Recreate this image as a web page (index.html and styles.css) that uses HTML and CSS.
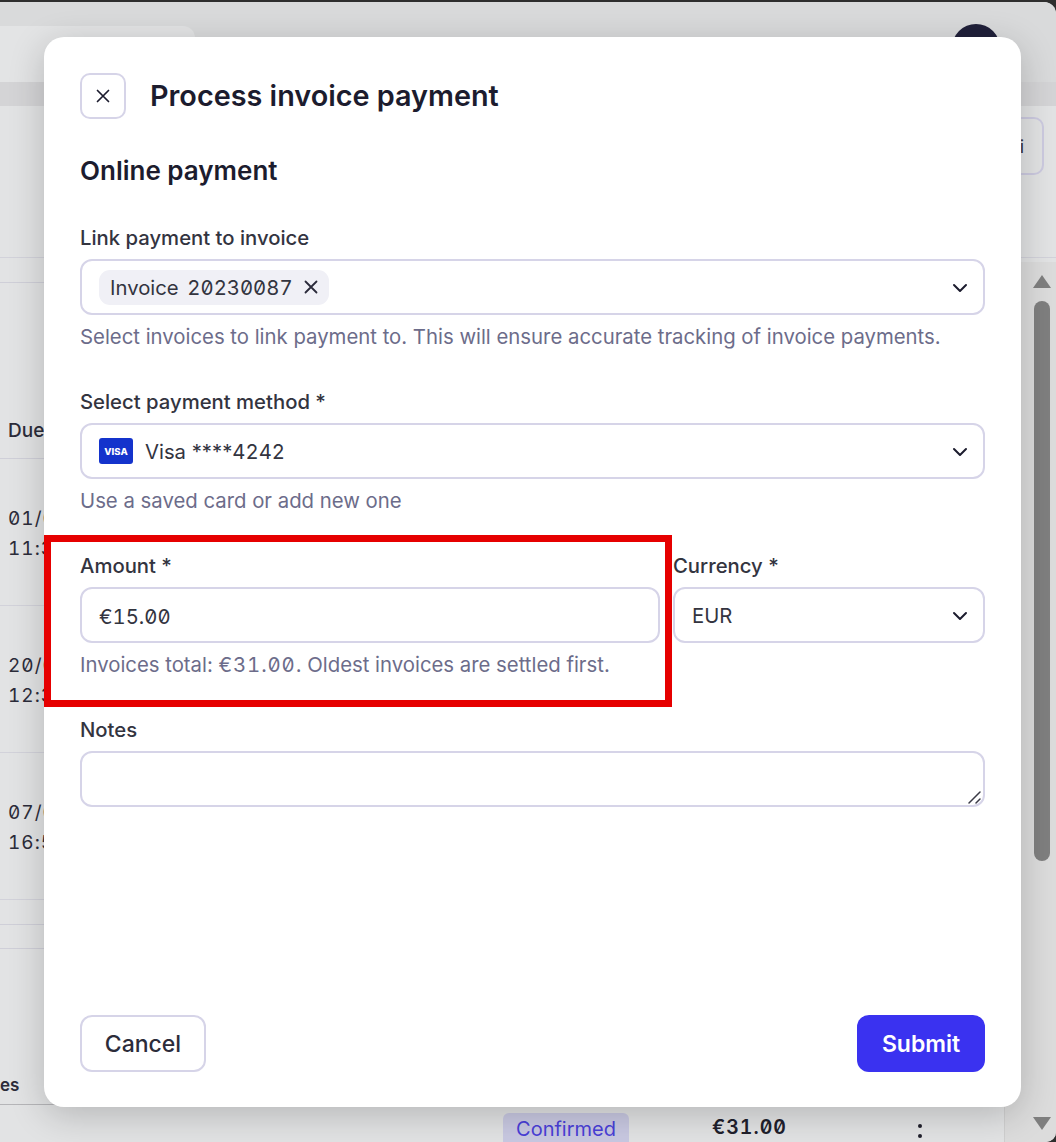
FILE: index.html
```html
<!DOCTYPE html>
<html lang="en">
<head>
    <meta charset="UTF-8" />
    <meta name="viewport" content="width=device-width, initial-scale=1.0">
    <title>Process invoice payment</title>
    <link rel="stylesheet" href="styles.css">
</head>
<body>
    <div class="window">
        <div class="topbar">
            <div class="tab"></div>
            <div class="avatar"></div>
        </div>
        <div class="band"></div>
        <div class="toolbar">
            <button class="tool-btn" type="button">Filtri</button>
        </div>
        <div class="content">
            <div class="table">
                <div class="table-gap"></div>
                <div class="table-head">Due date</div>
                <div class="table-row"><span>01/06</span><span>11:32</span></div>
                <div class="table-row"><span>20/05</span><span>12:30</span></div>
                <div class="table-row"><span>07/05</span><span>16:50</span></div>
                <div class="table-thin"></div>
                <div class="table-thin"></div>
                <div class="table-foot">
                    <span class="foot-label">es</span>
                </div>
                <div class="table-last">
                    <span class="badge">Confirmed</span>
                    <span class="last-amount">€31.00</span>
                    <span class="kebab"><i></i><i></i></span>
                </div>
            </div>
            <div class="scrollbar">
                <div class="arrow-up"></div>
                <div class="thumb"></div>
                <div class="arrow-down"></div>
            </div>
        </div>
    </div>

    <div class="modal">
        <div class="modal-header">
            <button class="close-btn" type="button" aria-label="Close">
                <svg width="16" height="16" viewBox="0 0 16 16" fill="none" stroke="#1c1c2e" stroke-width="1.7" stroke-linecap="round"><path d="M2.5 2.5l11 11M13.5 2.5l-11 11"/></svg>
            </button>
            <h1>Process invoice payment</h1>
        </div>

        <h2>Online payment</h2>

        <form class="payment-form">
            <div class="form-group">
                <label>Link payment to invoice</label>
                <div class="select-box">
                    <span class="chip"><span>Invoice <span class="num">20230087</span></span>
                        <svg width="16" height="16" viewBox="0 0 16 16" fill="none" stroke="#2a2a3a" stroke-width="1.8" stroke-linecap="round"><path d="M2.5 2.5l11 11M13.5 2.5l-11 11"/></svg>
                    </span>
                    <svg class="chevron" width="16" height="10" viewBox="0 0 16 10" fill="none" stroke="#1c1c2e" stroke-width="2" stroke-linecap="round" stroke-linejoin="round"><path d="M2 2l6 6 6-6"/></svg>
                </div>
                <div class="help">Select invoices to link payment to. This will ensure accurate tracking of invoice payments.</div>
            </div>

            <div class="form-group">
                <label>Select payment method *</label>
                <div class="select-box">
                    <span class="visa"><span>VISA</span></span>
                    <span>Visa ****<span class="num">4242</span></span>
                    <svg class="chevron" width="16" height="10" viewBox="0 0 16 10" fill="none" stroke="#1c1c2e" stroke-width="2" stroke-linecap="round" stroke-linejoin="round"><path d="M2 2l6 6 6-6"/></svg>
                </div>
                <div class="help">Use a saved card or add new one</div>
            </div>

            <div class="form-row">
                <div class="form-group">
                    <label for="amount">Amount *</label>
                    <input type="text" id="amount" value="€15.00" />
                    <div class="help">Invoices total: <span class="num">€31.00</span>. Oldest invoices are settled first.</div>
                </div>
                <div class="form-group">
                    <label>Currency *</label>
                    <div class="select-box">
                        <span>EUR</span>
                        <svg class="chevron" width="16" height="10" viewBox="0 0 16 10" fill="none" stroke="#1c1c2e" stroke-width="2" stroke-linecap="round" stroke-linejoin="round"><path d="M2 2l6 6 6-6"/></svg>
                    </div>
                </div>
            </div>

            <div class="form-group">
                <label for="notes">Notes</label>
                <div class="notes-wrap">
                    <textarea id="notes"></textarea>
                    <svg class="resize-handle" width="14" height="14" viewBox="0 0 14 14" fill="none" stroke="#3a3a46" stroke-width="1.5" stroke-linecap="round"><path d="M1 13L12 2M8 13l4-4"/></svg>
                </div>
            </div>
        </form>

        <div class="modal-footer">
            <button class="btn-cancel" type="button">Cancel</button>
            <button class="btn-submit" type="button">Submit</button>
        </div>
    </div>

    <div class="highlight"></div>
</body>
</html>
```

FILE: styles.css
```css
* {
    box-sizing: border-box;
}

html, body {
    margin: 0;
    height: 1142px;
    overflow: hidden;
}

body {
    position: relative;
    font-family: Inter, "Noto Sans", sans-serif;
    background-color: #2e2e2e;
}

/* page behind the dialog */
.window {
    height: 1140px;
    margin-top: 2px;
    display: flex;
    flex-direction: column;
    overflow: hidden;
    background-color: #e2e3e4;
    border-top-right-radius: 12px;
    border-bottom-right-radius: 10px;
}

.topbar {
    height: 80px;
    padding-top: 24px;
    display: flex;
    justify-content: space-between;
    background-color: #d9dadb;
}

.tab {
    width: 195px;
    height: 56px;
    background-color: #e3e4e5;
    border-top-right-radius: 12px;
}

.avatar {
    width: 48px;
    height: 48px;
    margin-top: -2px;
    margin-right: 56px;
    border-radius: 50%;
    background-color: #20203a;
}

.band {
    height: 24px;
    background-color: #d4d4d6;
}

.toolbar {
    height: 152px;
    padding: 11px 12px 0 0;
    display: flex;
    justify-content: flex-end;
    border-bottom: 1px solid #d2d2da;
}

.tool-btn {
    width: 120px;
    height: 58px;
    padding: 0 18px 0 0;
    text-align: right;
    font-family: inherit;
    font-size: 18px;
    color: #33343f;
    background: transparent;
    border: 2px solid #cccae0;
    border-radius: 10px;
}

.content {
    flex: 1;
    display: flex;
    min-height: 0;
}

.table {
    flex: 1;
    position: relative;
}

.table-gap {
    height: 25px;
    border-bottom: 1px solid #cfcfd8;
}

.table-head {
    height: 176px;
    padding: 136px 0 0 8px;
    font-size: 19px;
    font-weight: 500;
    color: #2c2c3a;
    border-bottom: 1px solid #cfcfd8;
}

.table-row {
    height: 147px;
    padding: 49px 0 0 8px;
    display: flex;
    flex-direction: column;
    gap: 8px;
    font-size: 19px;
    line-height: 22px;
    letter-spacing: 1px;
    color: #2c2c3a;
    font-feature-settings: "tnum", "zero";
    border-bottom: 1px solid #d2d2da;
}

.table-thin {
    height: 24.5px;
    border-bottom: 1px solid #cfcfd8;
}

.table-foot {
    height: 156px;
    padding: 126px 0 0 0;
    border-bottom: 1.5px solid #b5b5b8;
}

.foot-label {
    font-size: 17px;
    line-height: 20px;
    font-weight: 600;
    color: #2c2c3a;
}

.table-last {
    display: flex;
    align-items: flex-start;
    padding: 8px 0 0 503px;
}

.badge {
    width: 126px;
    height: 40px;
    padding-top: 4px;
    text-align: center;
    font-size: 20px;
    color: #4a3fd8;
    background-color: #c9c9e2;
    border-radius: 6px;
}

.last-amount {
    margin: 2px 0 0 83px;
    font-size: 19.5px;
    font-weight: 600;
    letter-spacing: 1px;
    color: #20202c;
    font-feature-settings: "tnum", "zero";
}

.kebab {
    margin: 11px 0 0 131px;
    display: flex;
    flex-direction: column;
    gap: 6px;
}

.kebab i {
    display: block;
    width: 4px;
    height: 4px;
    border-radius: 50%;
    background-color: #20202c;
}

.scrollbar {
    width: 52px;
    margin-top: 4px;
    padding-left: 30px;
    background-color: #dcdcdc;
    border-left: 1px solid #cfcfcf;
    display: flex;
    flex-direction: column;
    align-items: flex-start;
}

.arrow-up,
.arrow-down {
    width: 0;
    height: 0;
    margin-left: -2px;
    border-left: 9px solid transparent;
    border-right: 9px solid transparent;
}

.arrow-up {
    margin-top: 13px;
    border-bottom: 13px solid #7f7f7f;
}

.arrow-down {
    margin-top: 256px;
    border-top: 13px solid #7f7f7f;
}

.thumb {
    width: 16px;
    height: 560px;
    margin: 13px 0 0 -1px;
    background-color: #7f7f7f;
    border-radius: 8px;
}

/* dialog */
.modal {
    position: absolute;
    left: 44px;
    top: 37px;
    width: 977px;
    height: 1070px;
    padding: 36px 36px 35px;
    display: flex;
    flex-direction: column;
    background-color: #fff;
    border-radius: 20px;
    box-shadow: 0 8px 36px rgba(0,0,0,0.2);
}

.modal-header {
    display: flex;
    align-items: center;
    gap: 24px;
}

.close-btn {
    width: 46px;
    height: 46px;
    padding: 0;
    display: flex;
    align-items: center;
    justify-content: center;
    background: #fff;
    border: 2px solid #d6d4e8;
    border-radius: 10px;
}

h1 {
    margin: 0;
    font-size: 28.8px;
    line-height: 34px;
    font-weight: 600;
    color: #1c1c2e;
}

h2 {
    margin: 35px 0 0;
    font-size: 26px;
    line-height: 34px;
    font-weight: 600;
    color: #1c1c2e;
}

.payment-form {
    margin-top: 38px;
    display: flex;
    flex-direction: column;
    gap: 41px;
}

.form-row {
    display: grid;
    grid-template-columns: 580px 312px;
    gap: 13px;
}

label {
    display: block;
    margin-bottom: 9px;
    font-size: 20.3px;
    line-height: 24px;
    font-weight: 500;
    color: #33343f;
}

.select-box,
input,
textarea {
    display: flex;
    align-items: center;
    width: 100%;
    height: 56px;
    padding: 0 17px;
    background-color: #fff;
    border: 2px solid #d6d4e8;
    border-radius: 12px;
    font-family: inherit;
    font-size: 20.3px;
    color: #33343f;
}

input {
    padding-top: 2px;
    font-feature-settings: "tnum", "zero";
}

.notes-wrap {
    position: relative;
}

textarea {
    display: block;
    resize: none;
}

.resize-handle {
    position: absolute;
    right: 3px;
    bottom: 3px;
}

.chevron {
    margin-left: auto;
    margin-top: 2px;
    margin-right: -2px;
}

.num {
    font-feature-settings: "tnum", "zero";
}

.chip {
    display: flex;
    align-items: center;
    height: 35px;
    padding: 0 10px 0 11px;
    background-color: #f0f0f6;
    border-radius: 11px;
}

.chip .num {
    margin-left: 3px;
}

.chip svg {
    margin-left: 10px;
}

.visa {
    display: flex;
    align-items: center;
    justify-content: center;
    width: 34px;
    height: 26px;
    margin-right: 12px;
    background-color: #1433cc;
    border-radius: 3px;
}

.visa span {
    font-size: 9.5px;
    font-weight: 800;
    color: #fff;
}

.help {
    margin-top: 10px;
    font-size: 20.33px;
    line-height: 24px;
    color: #6c6c8a;
}

.help .num {
    letter-spacing: 0.9px;
}

.modal-footer {
    margin-top: auto;
    display: flex;
    justify-content: space-between;
}

.btn-cancel,
.btn-submit {
    height: 57px;
    font-family: inherit;
    font-size: 23px;
    font-weight: 500;
    border-radius: 12px;
}

.btn-cancel {
    width: 126px;
    color: #2c2c3a;
    background-color: #fff;
    border: 2px solid #d6d4e8;
}

.btn-submit {
    width: 128px;
    font-weight: 600;
    color: #fff;
    background-color: #3a32f0;
    border: none;
}

/* red annotation round the amount field */
.highlight {
    position: absolute;
    left: 44px;
    top: 535px;
    width: 628px;
    height: 172px;
    border: 7px solid #e60000;
}
```
